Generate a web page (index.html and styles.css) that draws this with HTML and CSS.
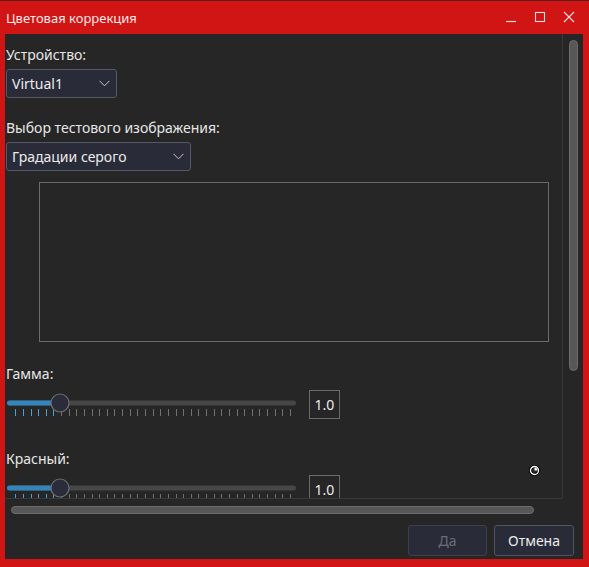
FILE: index.html
```html
<!DOCTYPE html>
<html lang="ru">
<head>
<meta charset="utf-8">
<title>Цветовая коррекция</title>
<link rel="stylesheet" href="styles.css">
</head>
<body>
<div class="window">
  <div class="titlebar">
    <span class="title">Цветовая коррекция</span>
    <div class="wbtns">
      <svg class="wbtn" width="12" height="12" viewBox="0 0 12 12"><path d="M1 10.5H11" stroke="#f4dede" stroke-width="1.2" fill="none"/></svg>
      <svg class="wbtn" width="12" height="12" viewBox="0 0 12 12"><rect x="1.5" y="1.5" width="9" height="9" stroke="#f4dede" stroke-width="1.1" fill="none"/></svg>
      <svg class="wbtn" width="12" height="12" viewBox="0 0 12 12"><path d="M1 1L11 11M11 1L1 11" stroke="#f4dede" stroke-width="1.1" fill="none"/></svg>
    </div>
  </div>
  <div class="client">
    <div class="scrollrow">
      <div class="viewport">
        <div class="label first">Устройство:</div>
        <div class="combo combo1"><span>Virtual1</span>
          <svg width="11" height="7" viewBox="0 0 11 7"><path d="M0.5 0.8L5.5 5.8L10.5 0.8" stroke="#c8c8cc" stroke-width="1" fill="none"/></svg>
        </div>
        <div class="label second">Выбор тестового изображения:</div>
        <div class="combo combo2"><span>Градации серого</span>
          <svg width="11" height="7" viewBox="0 0 11 7"><path d="M0.5 0.8L5.5 5.8L10.5 0.8" stroke="#c8c8cc" stroke-width="1" fill="none"/></svg>
        </div>
        <div class="preview"></div>
        <div class="label gamma">Гамма:</div>
        <div class="sliderrow">
          <svg class="slider" width="300" height="29" viewBox="0 0 300 29"></svg>
          <div class="value">1.0</div>
        </div>
        <div class="label red">Красный:</div>
        <div class="sliderrow">
          <svg class="slider" width="300" height="29" viewBox="0 0 300 29"></svg>
          <div class="value">1.0</div>
        </div>
        <svg class="cursor" width="11" height="11" viewBox="0 0 11 11"><circle cx="5.5" cy="5.5" r="4" fill="none" stroke="#000" stroke-width="3"/><circle cx="5.5" cy="5.5" r="4" fill="none" stroke="#fff" stroke-width="1.3"/><path d="M5.5 5.5L5.5 2.5A3 3 0 0 1 8.5 5.5Z" fill="#fff"/></svg>
      </div>
      <div class="vscroll"><div class="vthumb"></div></div>
    </div>
    <div class="hscroll"><div class="hthumb"></div></div>
    <div class="buttons">
      <div class="btn disabled">Да</div>
      <div class="btn">Отмена</div>
    </div>
  </div>
</div>
<script src="slider.js"></script>
</body>
</html>
```
FILE: slider.js
```js
(function () {
  var ns = "http://www.w3.org/2000/svg";
  function el(name, attrs) {
    var e = document.createElementNS(ns, name);
    for (var k in attrs) e.setAttribute(k, attrs[k]);
    return e;
  }
  document.querySelectorAll("svg.slider").forEach(function (s) {
    var gx0 = 2, gx1 = 291, cy = 13, thumb = 55;
    s.appendChild(el("rect", { x: gx0, y: cy - 2.5, width: gx1 - gx0, height: 5, rx: 2.5, fill: "#474747" }));
    s.appendChild(el("rect", { x: gx0, y: cy - 2.5, width: thumb - gx0, height: 5, rx: 2.5, fill: "#3585bd" }));
    for (var k = 0; k <= 36; k++) {
      var x = Math.round(10.3 + k * 7.63) + 0.5;
      s.appendChild(el("line", { x1: x, y1: 19, x2: x, y2: 26, stroke: k < 6 ? "#3fa3dc" : "#707070", "stroke-width": 1 }));
    }
    s.appendChild(el("circle", { cx: thumb, cy: cy, r: 9, fill: "#2a2c39", stroke: "#6e6e72", "stroke-width": 1.2 }));
  });
})();
```
FILE: styles.css
```css
* { box-sizing: border-box; }
html, body { margin: 0; padding: 0; }
body {
  width: 589px;
  height: 567px;
  overflow: hidden;
  font-family: "Noto Sans", "DejaVu Sans", sans-serif;
  font-size: 14px;
  color: #e6e6e6;
  background: #d11414;
}
.window {
  width: 589px;
  height: 567px;
  background: #d11414;
  border-top: 1px solid #5a1c1c;
  display: flex;
  flex-direction: column;
}
.titlebar {
  height: 33px;
  display: flex;
  align-items: center;
  padding-left: 6px;
  color: #fbeaea;
  font-size: 13px;
}
.title { flex: 1; }
.wbtns {
  display: flex;
  gap: 17px;
  padding-right: 14px;
  margin-top: -1px;
}
.wbtn { display: block; }
.client {
  margin: 0 6px 0 5px;
  height: 525px;
  background: #262626;
  display: flex;
  flex-direction: column;
}
.scrollrow {
  display: flex;
  height: 465px;
}
.viewport {
  position: relative;
  width: 558px;
  height: 465px;
  overflow: hidden;
  border-right: 1px solid #383838;
  border-bottom: 1px solid #383838;
}
.label {
  height: 18px;
  line-height: 18px;
  padding-left: 1px;
  white-space: nowrap;
}
.label.first { margin-top: 12px; }
.label.second { margin-top: 21px; }
.label.gamma { margin-top: 23px; }
.label.red { margin-top: 31px; }
.combo {
  margin-top: 5px;
  margin-left: 1px;
  height: 29px;
  background: #292b38;
  border: 1px solid #565a68;
  border-radius: 3px;
  display: flex;
  align-items: center;
  justify-content: space-between;
  padding: 0 6px 0 5px;
  color: #ececec;
}
.combo svg { display: block; margin-top: -1px; }
.combo1 { width: 111px; }
.combo2 { width: 185px; }
.preview {
  margin-top: 11px;
  margin-left: 34px;
  width: 510px;
  height: 160px;
  border: 1px solid #6a6a6a;
}
.sliderrow {
  display: flex;
  align-items: flex-start;
  margin-top: 7px;
  height: 29px;
}
.slider { display: block; }
.value {
  margin-left: 4px;
  width: 31px;
  height: 29px;
  border: 1px solid #6a6a6a;
  display: flex;
  align-items: center;
  justify-content: center;
  color: #ececec;
}
.cursor {
  position: absolute;
  left: 524px;
  top: 431px;
}
.vscroll {
  flex: 1;
  padding: 6px 0 0 6px;
}
.vthumb {
  width: 9px;
  height: 331px;
  background: #575757;
  border: 1px solid #6c6c6c;
  border-radius: 4.5px;
}
.hscroll {
  height: 26px;
  padding: 7px 0 0 6px;
}
.hthumb {
  width: 523px;
  height: 8px;
  background: #575757;
  border: 1px solid #6c6c6c;
  border-radius: 4px;
}
.buttons {
  display: flex;
  justify-content: flex-end;
  gap: 7px;
  padding-right: 9px;
}
.btn {
  width: 80px;
  height: 31px;
  background: #292b38;
  border: 1px solid #4f5362;
  border-radius: 3px;
  display: flex;
  align-items: center;
  justify-content: center;
  color: #ececec;
}
.btn.disabled {
  width: 79px;
  color: #696d7b;
  border-color: #3d404c;
}
```
